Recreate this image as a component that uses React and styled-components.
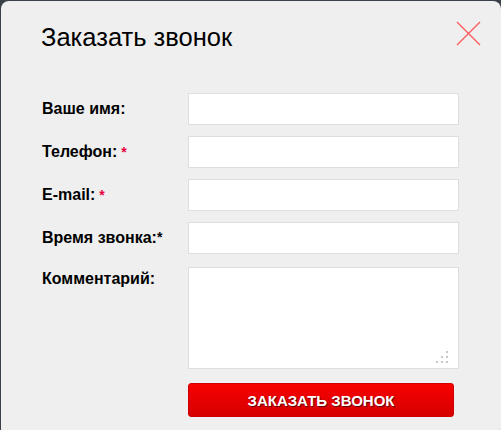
import React from "react";
import styled, { createGlobalStyle } from "styled-components";

const GlobalStyle = createGlobalStyle`
  html, body {
    margin: 0;
    padding: 0;
    background: #3a4148;
    font-family: "Liberation Sans", Arial, sans-serif;
  }
`;

const fields = [
  { label: "Ваше имя:", mark: null },
  { label: "Телефон:", mark: "red" },
  { label: "E-mail:", mark: "red" },
  { label: "Время звонка:", mark: "black" },
];

function App() {
  return (
    <>
      <GlobalStyle />
      <Modal>
        <Header>
          <Title>Заказать звонок</Title>
          <CloseButton aria-label="close">
            <svg width="25" height="25" viewBox="0 0 25 25">
              <path d="M1 1 L24 24 M24 1 L1 24" stroke="#ff5a5a" strokeWidth="1.3" fill="none" />
            </svg>
          </CloseButton>
        </Header>

        <Form>
          {fields.map((f) => (
            <Row key={f.label}>
              <Label>
                {f.label}
                {f.mark === "red" && <RedStar> *</RedStar>}
                {f.mark === "black" && <BlackStar>*</BlackStar>}
              </Label>
              <Input />
            </Row>
          ))}
          <Row $top>
            <Label $top>Комментарий:</Label>
            <AreaWrap>
              <TextArea />
              <Grip width="12" height="12" viewBox="0 0 12 12">
                <rect x="10" y="0" width="2" height="2" />
                <rect x="5" y="5" width="2" height="2" />
                <rect x="10" y="5" width="2" height="2" />
                <rect x="0" y="10" width="2" height="2" />
                <rect x="5" y="10" width="2" height="2" />
                <rect x="10" y="10" width="2" height="2" />
              </Grip>
            </AreaWrap>
          </Row>
          <Row>
            <span />
            <SubmitButton>Заказать звонок</SubmitButton>
          </Row>
        </Form>
      </Modal>
    </>
  );
}

export default App;

const Modal = styled.div`
  margin: 1px 0 0 1px;
  height: 436px;
  background: #efefef;
  border-radius: 8px;
  box-sizing: border-box;
  padding: 19px 20px 0 40px;
`;

const Header = styled.div`
  display: flex;
  justify-content: space-between;
  align-items: flex-start;
`;

const Title = styled.h2`
  margin: 0;
  font-size: 25.5px;
  font-weight: normal;
  color: #000;
  line-height: 34px;
`;

const CloseButton = styled.button`
  background: none;
  border: 0;
  padding: 0;
  margin-top: 1px;
  width: 25px;
  height: 25px;
  cursor: pointer;
  svg {
    display: block;
  }
`;

const Form = styled.div`
  margin-top: 39px;
  display: flex;
  flex-direction: column;
  gap: 11px;
`;

const Row = styled.div`
  display: grid;
  grid-template-columns: 147px 271px;
  align-items: ${(p) => (p.$top ? "start" : "center")};
  margin-top: ${(p) => (p.$top ? "2px" : "0")};
`;

const Label = styled.label`
  font-size: 16px;
  font-weight: bold;
  color: #000;
  padding-left: 1px;
  padding-top: ${(p) => (p.$top ? "3px" : "0")};
`;

const RedStar = styled.span`
  color: #e8003d;
  font-size: 14px;
`;

const BlackStar = styled.span`
  color: #000;
  font-size: 14px;
  vertical-align: top;
`;

const Input = styled.input`
  box-sizing: border-box;
  width: 271px;
  height: 32px;
  background: #fff;
  border: 1px solid #dedede;
  outline: none;
  margin: 0;
`;

const AreaWrap = styled.div`
  position: relative;
  width: 271px;
  height: 102px;
`;

const TextArea = styled.textarea`
  box-sizing: border-box;
  display: block;
  width: 271px;
  height: 102px;
  background: #fff;
  border: 1px solid #dedede;
  outline: none;
  resize: none;
  margin: 0;
`;

const Grip = styled.svg`
  position: absolute;
  right: 11px;
  bottom: 6px;
  fill: #c8c8c8;
`;

const SubmitButton = styled.button`
  box-sizing: border-box;
  width: 266px;
  height: 34px;
  margin-top: 3px;
  border: 1px solid #d00000;
  border-radius: 3px;
  background: linear-gradient(to bottom, #f80000, #d60000);
  color: #fff;
  font-family: "Liberation Sans", Arial, sans-serif;
  font-size: 15px;
  font-weight: bold;
  text-transform: uppercase;
  text-shadow: 1px 1px 1px #5a0000;
  cursor: pointer;
`;
